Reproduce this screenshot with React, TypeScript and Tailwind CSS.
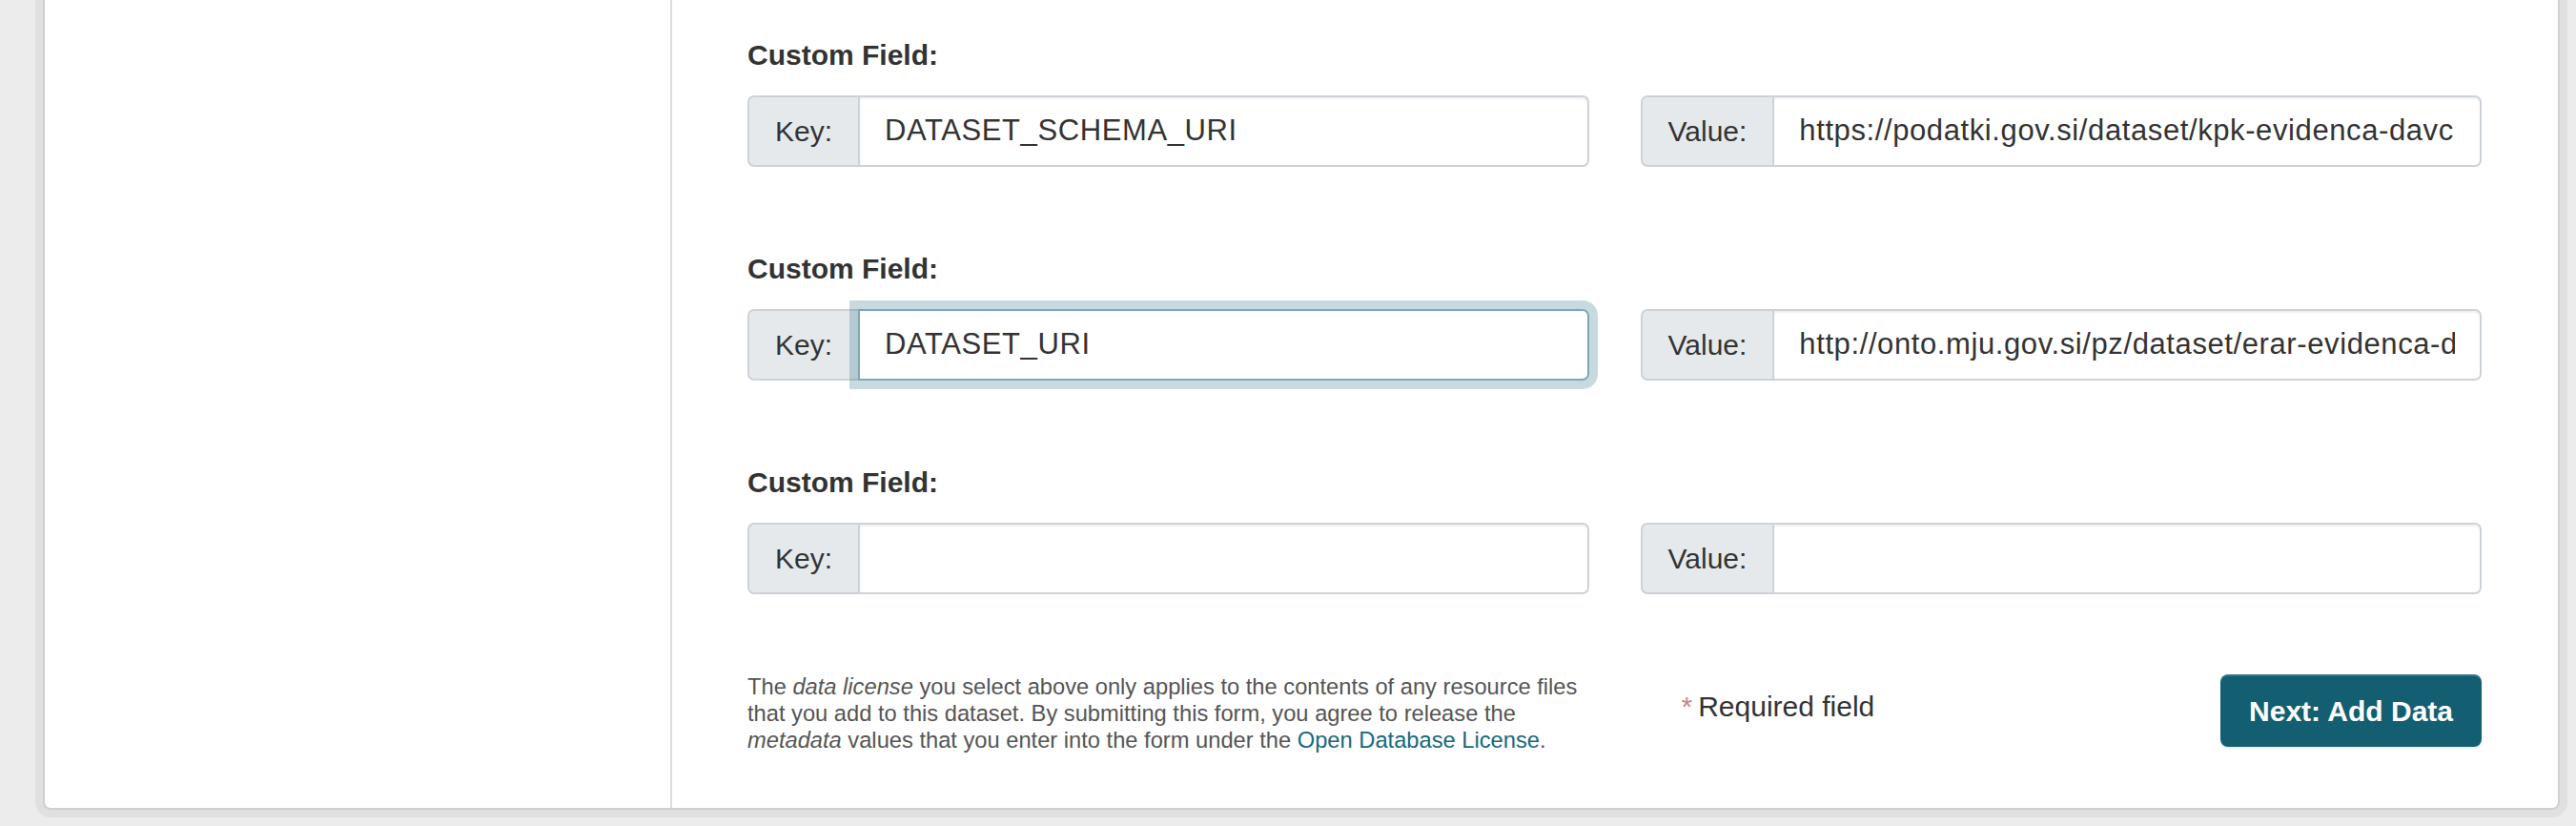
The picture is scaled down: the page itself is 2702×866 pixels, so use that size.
import React from "react";

type FieldProps = {
  keyText: string;
  value: string;
  focused?: boolean;
};

function Addon({ label }: { label: string }) {
  return (
    <span className="flex items-center rounded-l-[7px] border-2 border-r-0 border-[#ccd3d8] bg-[#e5e9ec] px-[27px] text-[30px] text-[#333]">
      {label}
    </span>
  );
}

function CustomField({ keyText, value, focused }: FieldProps) {
  return (
    <div>
      <label className="block text-[30px] font-bold leading-[36px] text-[#333]">
        Custom Field:
      </label>
      <div className="mt-[24px] grid grid-cols-2 gap-x-[54px]">
        <div className="flex h-[75px]">
          <Addon label="Key:" />
          <input
            readOnly
            value={keyText}
            className={
              focused
                ? "relative z-10 min-w-0 flex-1 rounded-r-[7px] border-2 border-[#7aa9b5] bg-white px-[26px] text-[31px] tracking-[0.6px] text-[#333] shadow-[0_0_0_9px_rgba(18,95,115,0.23)] outline-none"
                : "min-w-0 flex-1 rounded-r-[7px] border-2 border-[#ccd3d8] bg-white px-[26px] text-[31px] tracking-[0.6px] text-[#333] shadow-[inset_0_2px_2px_rgba(0,0,0,0.06)] outline-none"
            }
          />
        </div>
        <div className="flex h-[75px]">
          <Addon label="Value:" />
          <input
            readOnly
            value={value}
            className="min-w-0 flex-1 rounded-r-[7px] border-2 border-[#ccd3d8] bg-white px-[26px] text-[31px] tracking-[0.6px] text-[#333] shadow-[inset_0_2px_2px_rgba(0,0,0,0.06)] outline-none"
          />
        </div>
      </div>
    </div>
  );
}

export default function App() {
  return (
    <div className="h-[866px] overflow-hidden bg-[#ececec] pb-[17px] pl-[45px] pr-[17px] font-['Liberation_Sans',Arial,sans-serif]">
      <div className="flex rounded-b-[8px] border-2 border-t-0 border-[#cfcfcf] bg-white shadow-[0_0_0_8px_rgba(0,0,0,0.05)]">
        <aside className="w-[658px] shrink-0 border-r-2 border-[#dddddd]" />
        <main className="flex-1 pb-[57px] pl-[79px] pr-[80px] pt-[40px]">
          <div className="flex flex-col gap-y-[89px]">
            <CustomField
              keyText="DATASET_SCHEMA_URI"
              value="https://podatki.gov.si/dataset/kpk-evidenca-davcnih-zavezancev"
            />
            <CustomField
              keyText="DATASET_URI"
              value="http://onto.mju.gov.si/pz/dataset/erar-evidenca-davcnih-zavezancev"
              focused
            />
            <CustomField keyText="" value="" />
          </div>

          <div className="mt-[83px] grid grid-cols-2 gap-x-[54px]">
            <p className="max-w-[905px] text-[23.7px] leading-[28px] text-[#555]">
              The <em>data license</em> you select above only applies to the
              contents of any resource files that you add to this dataset. By
              submitting this form, you agree to release the{" "}
              <em>metadata</em> values that you enter into the form under the{" "}
              <a href="#" className="text-[#16697a]">
                Open Database License
              </a>
              .
            </p>
            <div className="flex items-start justify-between">
              <p className="ml-[43px] mt-[17px] text-[30px] leading-[36px] text-[#333]">
                <span className="mr-[6px] text-[#c6898b]">*</span>
                Required field
              </p>
              <button className="mt-[1px] h-[76px] rounded-[8px] bg-[#135f71] px-[30px] text-[30px] font-bold text-white shadow-[inset_0_2px_0_rgba(255,255,255,0.15),0_2px_2px_rgba(0,0,0,0.08)]">
                Next: Add Data
              </button>
            </div>
          </div>
        </main>
      </div>
    </div>
  );
}
